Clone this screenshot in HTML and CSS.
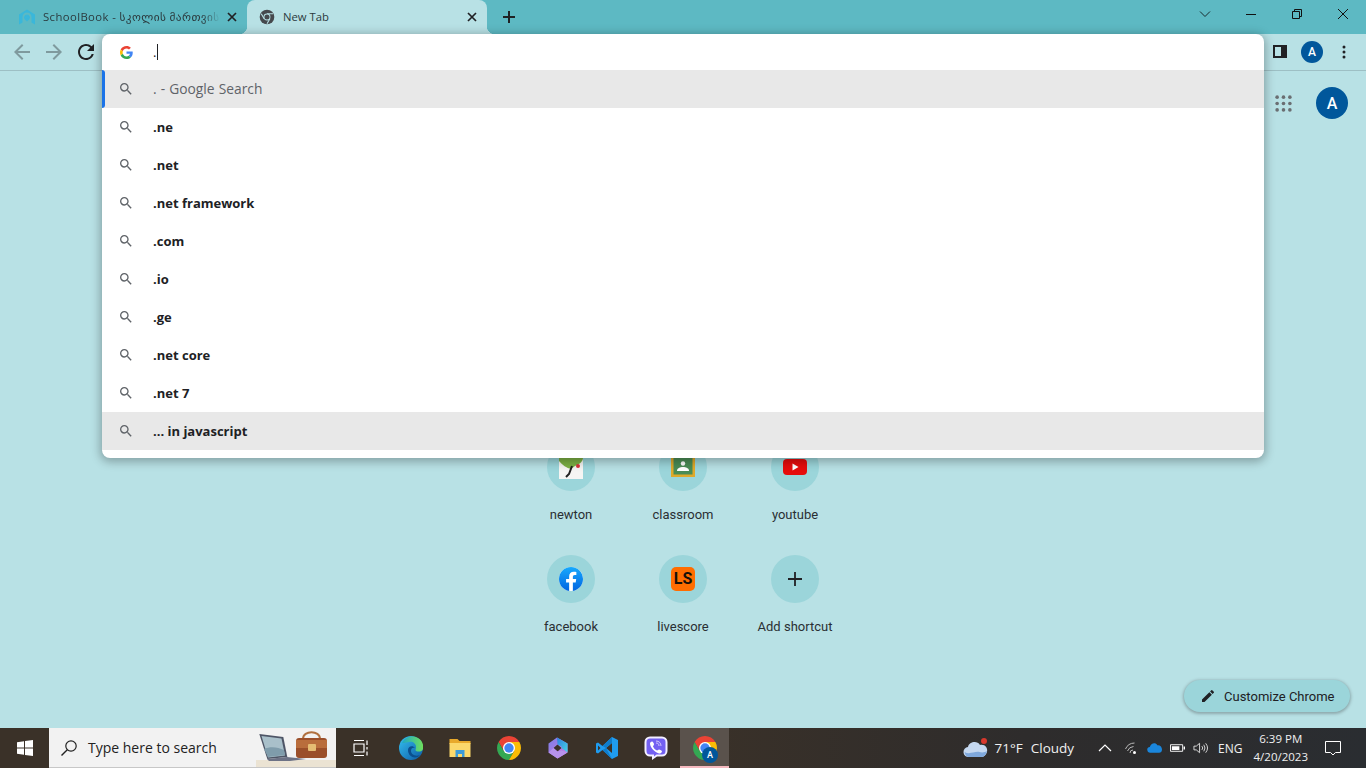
FILE: index.html
```html
<!DOCTYPE html>
<html lang="en">
<head>
<meta charset="utf-8">
<title>New Tab</title>
<link rel="stylesheet" href="styles.css">
</head>
<body>
<svg class="defs" aria-hidden="true">
  <defs>
    <symbol id="i-search" viewBox="0 0 24 24"><path d="M15.5 14h-.79l-.28-.27A6.471 6.471 0 0 0 16 9.5 6.5 6.5 0 1 0 9.5 16c1.61 0 3.09-.59 4.23-1.57l.27.28v.79l5 4.99L20.49 19l-4.99-5zm-6 0C7.01 14 5 11.99 5 9.5S7.01 5 9.5 5 14 7.01 14 9.5 11.99 14 9.5 14z"/></symbol>
    <symbol id="i-close" viewBox="0 0 12 12"><path d="M2 2l8 8M10 2l-8 8" stroke="currentColor" stroke-width="1.7" fill="none"/></symbol>
    <symbol id="i-chrome" viewBox="2 2 20 20">
      <path fill="#ea4335" d="M20.66 7A10 10 0 0 0 3.34 7L7.67 14.5 12 7z"/>
      <path fill="#34a853" d="M3.34 7A10 10 0 0 0 12 22l4.33-7.5H7.67z"/>
      <path fill="#fbbc05" d="M12 22A10 10 0 0 0 20.66 7H12l4.33 7.5z"/>
      <circle cx="12" cy="12" r="5" fill="#fff"/><circle cx="12" cy="12" r="3.9" fill="#4285f4"/>
    </symbol>
  </defs>
</svg>

<div class="tabstrip">
  <div class="tab">
    <svg class="favicon" viewBox="0 0 16 16"><path fill="#3ab7da" fill-rule="evenodd" d="M8 0.500L16 5.500v10l-3.500-2V8a4.500 4.500 0 0 0-9 0v5.500L0 15.500v-10zM8 5.500a3 3 0 0 1 2.400 4.800L8 12.500 5.600 10.300A3 3 0 0 1 8 5.500z"/><circle cx="8" cy="8.500" r="1.500" fill="#3ab7da"/></svg>
    <span class="tab-title tab-title-faded">SchoolBook - სკოლის მართვის</span>
    <svg class="tab-close"><use href="#i-close"/></svg>
  </div>
  <div class="tab tab-active">
    <svg class="favicon" viewBox="0 0 24 24"><circle cx="12" cy="12" r="11" fill="#45494d"/><path d="M12 7h9M7.67 14.5L3.4 7M16.33 14.5L12 22" stroke="#b8e1e5" stroke-width="1.6" fill="none"/><circle cx="12" cy="12" r="5.2" fill="#b8e1e5"/><circle cx="12" cy="12" r="3.8" fill="#45494d"/></svg>
    <span class="tab-title">New Tab</span>
    <svg class="tab-close"><use href="#i-close"/></svg>
  </div>
  <svg class="newtab" viewBox="0 0 14 14"><path d="M7 1v12M1 7h12" stroke="#1f2224" stroke-width="2" fill="none"/></svg>
  <div class="winctl">
    <div class="winbtn"><svg viewBox="0 0 12 12"><path d="M1 3.500l5 5 5-5" fill="none" stroke="#1a2a2d"/></svg></div>
    <div class="winbtn"><svg viewBox="0 0 12 12"><path d="M1 6.500h10" fill="none" stroke="#111"/></svg></div>
    <div class="winbtn"><svg viewBox="0 0 12 12"><path d="M1.500 3.500h7v7h-7zM3.500 3.500v-2h7v7h-2" fill="none" stroke="#111"/></svg></div>
    <div class="winbtn"><svg viewBox="0 0 12 12"><path d="M1 1l10 10M11 1L1 11" fill="none" stroke="#111"/></svg></div>
  </div>
</div>

<div class="toolbar">
  <svg class="nav nav-off" viewBox="0 0 24 24"><path d="M20 11H7.830l5.590-5.590L12 4l-8 8 8 8 1.410-1.410L7.830 13H20v-2z"/></svg>
  <svg class="nav nav-off" viewBox="0 0 24 24"><path d="M12 4l-1.410 1.410L16.170 11H4v2h12.170l-5.580 5.590L12 20l8-8z"/></svg>
  <svg class="nav" viewBox="0 0 24 24"><path d="M17.650 6.350A7.958 7.958 0 0 0 12 4c-4.420 0-7.990 3.580-7.990 8s3.570 8 7.990 8c3.730 0 6.840-2.550 7.730-6h-2.080A5.990 5.990 0 0 1 12 18c-3.310 0-6-2.690-6-6s2.690-6 6-6c1.660 0 3.140.69 4.220 1.780L13 11h7V4l-2.350 2.350z"/></svg>
  <div class="toolbar-end">
    <svg class="panel-icon" viewBox="0 0 14 14"><path fill="#202124" d="M0 0h14v13H0z"/><path fill="#b8e1e5" d="M2 2h6v9H2z"/></svg>
    <span class="avatar avatar-small">A</span>
    <svg class="menu-dots" viewBox="0 0 4 14"><circle cx="2" cy="2" r="1.500"/><circle cx="2" cy="7" r="1.500"/><circle cx="2" cy="12" r="1.500"/></svg>
  </div>
</div>

<main class="ntp">
  <header class="ntp-head">
    <svg class="apps" viewBox="0 0 16 16"><g fill="#6a6e72"><circle cx="2" cy="2" r="1.700"/><circle cx="8" cy="2" r="1.700"/><circle cx="14" cy="2" r="1.700"/><circle cx="2" cy="8" r="1.700"/><circle cx="8" cy="8" r="1.700"/><circle cx="14" cy="8" r="1.700"/><circle cx="2" cy="14" r="1.700"/><circle cx="8" cy="14" r="1.700"/><circle cx="14" cy="14" r="1.700"/></g></svg>
    <span class="avatar avatar-large">A</span>
  </header>
  <section class="tiles">
    <div class="tile"><span class="tile-disc"><svg class="tile-icon" viewBox="0 0 24 24"><path fill="#f5f5f3" d="M0 0h24v24H0z"/><path fill="#7cb044" d="M0 0h24v3c0 4-5 7-8 8l-4 3c-4-1-9-4-12-8z"/><path d="M13 11l-3 8-3 3" stroke="#222" stroke-width="2" fill="none"/><circle cx="19" cy="11" r="2" fill="#d8343a"/></svg></span><span class="tile-label">newton</span></div>
    <div class="tile"><span class="tile-disc"><svg class="tile-icon" viewBox="0 0 24 24"><path fill="#dfa92a" d="M0 0h24v22H0z"/><path fill="#4a8c55" d="M2.500 2h19v17.500h-19z"/><circle cx="12" cy="8.500" r="2.200" fill="#fff"/><path fill="#fff" d="M6 16c0-3 3-4 6-4s6 1 6 4z"/></svg></span><span class="tile-label">classroom</span></div>
    <div class="tile"><span class="tile-disc"><svg class="tile-icon" viewBox="0 0 24 24"><rect x="0" y="4" width="24" height="16" rx="4" fill="#e60c0c"/><path fill="#fff" d="M9.500 8.500v7l6-3.500z"/></svg></span><span class="tile-label">youtube</span></div>
    <div class="tile"><span class="tile-disc"><svg class="tile-icon" viewBox="0 0 24 24"><defs><linearGradient id="fb" x1="0" y1="0" x2="0" y2="1"><stop offset="0" stop-color="#17a9fd"/><stop offset="1" stop-color="#0165e1"/></linearGradient></defs><circle cx="12" cy="12" r="12" fill="#fff"/><path fill="url(#fb)" d="M24 12.070C24 5.400 18.630 0 12 0S0 5.400 0 12.070c0 6.030 4.390 11.020 10.130 11.930v-8.440H7.080v-3.490h3.050V9.410c0-3.020 1.790-4.690 4.530-4.690 1.310 0 2.690.23 2.690.23v2.970h-1.520c-1.490 0-1.960.93-1.960 1.890v2.260h3.330l-.53 3.490h-2.800V24C19.610 23.090 24 18.100 24 12.070z"/></svg></span><span class="tile-label">facebook</span></div>
    <div class="tile"><span class="tile-disc"><span class="ls-logo">LS</span></span><span class="tile-label">livescore</span></div>
    <div class="tile"><span class="tile-disc"><svg class="tile-plus" viewBox="0 0 14 14"><path d="M7 0v14M0 7h14" stroke="#202124" stroke-width="1.800" fill="none"/></svg></span><span class="tile-label">Add shortcut</span></div>
  </section>
  <button class="customize" type="button">
    <svg class="pencil" viewBox="0 0 24 24"><path d="M3 17.250V21h3.750L17.810 9.940l-3.750-3.750L3 17.250zM20.710 7.040a1 1 0 0 0 0-1.410l-2.340-2.340a1 1 0 0 0-1.410 0l-1.830 1.830 3.750 3.750 1.830-1.830z"/></svg>
    <span>Customize Chrome</span>
  </button>
</main>

<div class="omnibox">
  <div class="omni-input">
    <svg class="g-logo" viewBox="0 0 48 48"><path fill="#EA4335" d="M24 9.500c3.540 0 6.710 1.220 9.210 3.600l6.850-6.850C35.900 2.380 30.470 0 24 0 14.620 0 6.510 5.380 2.560 13.220l7.980 6.190C12.430 13.720 17.740 9.500 24 9.500z"/><path fill="#4285F4" d="M46.980 24.550c0-1.570-.15-3.090-.38-4.550H24v9.020h12.940c-.58 2.960-2.260 5.480-4.780 7.180l7.730 6c4.510-4.180 7.090-10.360 7.090-17.650z"/><path fill="#FBBC05" d="M10.530 28.590c-.48-1.450-.76-2.990-.76-4.590s.27-3.140.76-4.590l-7.980-6.190C.92 16.460 0 20.120 0 24c0 3.880.92 7.540 2.560 10.780l7.970-6.190z"/><path fill="#34A853" d="M24 48c6.480 0 11.930-2.130 15.890-5.810l-7.730-6c-2.150 1.450-4.920 2.300-8.160 2.300-6.260 0-11.570-4.220-13.470-9.910l-7.980 6.190C6.510 42.620 14.620 48 24 48z"/></svg>
    <span class="omni-text">.</span><span class="caret"></span>
  </div>
  <div class="omni-row omni-row-selected"><svg class="omni-icon"><use href="#i-search"/></svg><span class="omni-plain">. - Google Search</span></div>
  <div class="omni-row"><svg class="omni-icon"><use href="#i-search"/></svg><span class="omni-bold">.ne</span></div>
  <div class="omni-row"><svg class="omni-icon"><use href="#i-search"/></svg><span class="omni-bold">.net</span></div>
  <div class="omni-row"><svg class="omni-icon"><use href="#i-search"/></svg><span class="omni-bold">.net framework</span></div>
  <div class="omni-row"><svg class="omni-icon"><use href="#i-search"/></svg><span class="omni-bold">.com</span></div>
  <div class="omni-row"><svg class="omni-icon"><use href="#i-search"/></svg><span class="omni-bold">.io</span></div>
  <div class="omni-row"><svg class="omni-icon"><use href="#i-search"/></svg><span class="omni-bold">.ge</span></div>
  <div class="omni-row"><svg class="omni-icon"><use href="#i-search"/></svg><span class="omni-bold">.net core</span></div>
  <div class="omni-row"><svg class="omni-icon"><use href="#i-search"/></svg><span class="omni-bold">.net 7</span></div>
  <div class="omni-row omni-row-hover"><svg class="omni-icon"><use href="#i-search"/></svg><span class="omni-bold">... in javascript</span></div>
</div>

<footer class="taskbar">
  <div class="start"><svg viewBox="0 0 16 16"><path fill="#fff" d="M0 2.300L7 1.300V7.600H0zM8 1.100L16 0V7.600H8zM0 8.500H7V14.800L0 13.800zM8 8.500H16V16L8 14.900z"/></svg></div>
  <div class="searchbox">
    <svg class="searchbox-icon" viewBox="0 0 18 18"><circle cx="11" cy="7" r="5.200" fill="none" stroke="#222" stroke-width="1.200"/><path d="M7.300 10.700L1.500 16.500" stroke="#222" stroke-width="1.400"/></svg>
    <span class="searchbox-text">Type here to search</span>
    <svg class="searchbox-art" viewBox="0 0 80 40">
      <path fill="#ebe3d3" d="M0 32h80v8H0z"/>
      <path fill="#4e5566" d="M3.300 6l24 3 4 20-20 2z"/><path fill="#a9c0ca" d="M5.500 8l20 2.500 3.500 17-17 2z"/><path fill="#7f9cab" d="M8 21c6-3 14-2 20 1l1 5-17 2z"/>
      <path fill="#6d7285" d="M11 31l20-2 19 2-16 2H13z"/>
      <path fill="none" stroke="#b0703f" stroke-width="2" d="M47 11c0-9 17-9 17 0"/>
      <rect x="40" y="10" width="31" height="20" rx="3" fill="#9b4f2a"/><path fill="#b96d3c" d="M40 12h31v8H40z"/><rect x="52" y="16" width="8" height="7" rx="1" fill="#e5bc73"/>
    </svg>
  </div>
  <div class="taskview"><svg viewBox="0 0 16 16"><path fill="none" stroke="#fff" stroke-width="1.200" d="M1 .5h10M1 15.500h10M1 4h10v8H1zM14 .5v15"/><path stroke="#3a3128" stroke-width="2" d="M14 5v2M14 9.500v2"/></svg></div>
  <div class="pins">
    <div class="pin"><svg viewBox="0 0 24 24"><defs><linearGradient id="edge1" x1="0" y1="0" x2="1" y2="1"><stop offset="0" stop-color="#35c1f1"/><stop offset="1" stop-color="#0c59a4"/></linearGradient><linearGradient id="edge2" x1="0" y1="0" x2="1" y2="0"><stop offset="0" stop-color="#1fa8c4"/><stop offset="1" stop-color="#6fe05c"/></linearGradient></defs><circle cx="12" cy="12" r="12" fill="url(#edge1)"/><path fill="url(#edge2)" d="M3 7C6 1 13-1 19 2c4 2 6 7 5 11-1 3-5 3-7 2-1-1 0-2 0-4 0-4-4-6-7-5-3 0-6 2-7 1z"/><path fill="#0b4f8e" d="M9 14c0-4 5-5 7-2-2-1-4 0-4 3 0 3 4 6 9 4-4 5-12 2-12-5z"/></svg></div>
    <div class="pin"><svg viewBox="0 0 24 24"><path fill="#e8a92b" d="M1.500 3h8l2 2h11v3h-21z"/><path fill="#fbd86b" d="M1.500 7h21v14h-21z"/><path fill="#3c9bd8" d="M7.500 21v-7h9v7h-2.500v-3h-4v3z"/></svg></div>
    <div class="pin"><svg viewBox="0 0 24 24"><use href="#i-chrome"/></svg></div>
    <div class="pin"><svg viewBox="0 0 24 24"><defs><linearGradient id="m365a" x1="0" y1="0" x2="1" y2="1"><stop offset="0" stop-color="#2f7fe0"/><stop offset="1" stop-color="#46d4e6"/></linearGradient><linearGradient id="m365b" x1="0" y1="0" x2="1" y2="1"><stop offset="0" stop-color="#7a7fe8"/><stop offset="1" stop-color="#d27ae0"/></linearGradient></defs><path fill="url(#m365b)" fill-rule="evenodd" d="M11 1.500l10.500 6v9l-10 6-9-6v-9zM11.500 8.500L7.500 12l4 3.500 4-3.500z"/><path fill="url(#m365a)" d="M11 1.500l10.500 6v9l-6-4.500v-1.500l-4-2z"/><path fill="#b792ec" d="M2.500 16.500l5-4.500 4 3.500 4-1 6 2-10 6z"/></svg></div>
    <div class="pin"><svg viewBox="0 0 24 24"><path fill="#1f9cf0" fill-rule="evenodd" d="M17 1l6 3v16l-6 3L7.500 14 3 17.500 1 16.500v-9l2-1L7.500 10zM17 7l-6 5 6 5zM3 9.500v5L5.500 12z"/><path fill="#0f7ccb" d="M17 1l-9.500 9 3.500 2 6-5zM7.500 14L17 23l-6-11z"/></svg></div>
    <div class="pin"><svg viewBox="0 0 24 24"><path fill="#f3efff" d="M6 0.500h12A5.500 5.500 0 0 1 23.500 6v9a5.500 5.500 0 0 1-5.500 5.500h-5L8 24v-3.500H6A5.500 5.500 0 0 1 .5 15V6A5.500 5.500 0 0 1 6 .5z"/><path fill="#7360f2" d="M6 2.500h12A3.500 3.500 0 0 1 21.500 6v9a3.500 3.500 0 0 1-3.500 3.500h-5.500L10 20.500v-2H6A3.500 3.500 0 0 1 2.500 15V6A3.500 3.500 0 0 1 6 2.500z"/><path fill="#fff" d="M8 5.500c1 0 2 2 2 3s-1 1-1 2c1 2 2 3 4 4 1 0 1-1 2-1s3 1 3 2-2 2.500-3 2C10 16 6 11 6 7.500c0-1 1-2 2-2z"/><path fill="none" stroke="#d9d0fb" stroke-width=".9" d="M12 5c3 0 5 2 5 5M12 7c2 0 3 1 3 3"/></svg></div>
    <div class="pin pin-active"><svg viewBox="0 0 24 24"><use href="#i-chrome"/></svg><span class="pin-badge">A</span></div>
  </div>
  <div class="tray">
    <svg class="weather" viewBox="0 0 26 20"><circle cx="21" cy="3" r="3" fill="#d8382c"/><path fill="#c5d8f0" d="M6 19a5 5 0 0 1-1-10c1-5 9-7 12-2 5-1 8 3 7 7-1 3-3 5-6 5z"/><path fill="#7fa8dc" d="M1.500 14c5 3 10-1 15 0 3 1 6 0 7.500-1-1 4-3 6-6 6H6c-2 0-4-2-4.500-5z"/></svg>
    <span class="tray-temp">71°F</span>
    <span class="tray-cond">Cloudy</span>
    <svg class="tray-chev" viewBox="0 0 14 8"><path d="M1 7l6-6 6 6" fill="none" stroke="#fff" stroke-width="1.200"/></svg>
    <svg class="tray-ico" viewBox="0 0 14 14"><g fill="none" stroke="#bbb"><path d="M1 8a10 10 0 0 1 9-6M3 10a7 7 0 0 1 6-4.500M5.500 12a3 3 0 0 1 3-3"/></g><circle cx="10" cy="11.500" r="1.500" fill="#fff"/></svg>
    <svg class="tray-ico" viewBox="0 0 16 12"><path fill="#1a86dc" d="M3.500 11a3 3 0 0 1-.5-6C4 1 9-.5 11 3c3-.5 5 2 5 4.500C16 10 14.500 11 13 11z"/></svg>
    <svg class="tray-ico" viewBox="0 0 16 10"><path fill="none" stroke="#fff" d="M.5 1.500h13v7H.5z"/><path fill="#fff" d="M2 3h8v4H2zM14.500 3.500H16v3h-1.500z"/></svg>
    <svg class="tray-ico" viewBox="0 0 16 14"><path fill="none" stroke="#ddd" d="M1 5v4h2.500L7 12V2L3.500 5zM9.500 5a3 3 0 0 1 0 4M11.500 3.500a6 6 0 0 1 0 7M13.500 2a8 8 0 0 1 0 10"/></svg>
    <span class="tray-lang">ENG</span>
    <div class="clock"><span>6:39 PM</span><span>4/20/2023</span></div>
    <svg class="notif" viewBox="0 0 16 15"><path fill="none" stroke="#fff" d="M.5.500h15v11h-5L8 14l-2.500-2.500h-5z"/></svg>
  </div>
</footer>
</body>
</html>
```
FILE: styles.css
```css
* { box-sizing: border-box; }
html, body { margin: 0; height: 100%; }
body {
  width: 1366px;
  height: 768px;
  overflow: hidden;
  position: relative;
  display: flex;
  flex-direction: column;
  background: #b8e1e5;
  font-family: Roboto, "Liberation Sans", sans-serif;
  color: #202124;
}
.defs { width: 0; height: 0; position: absolute; }

/* tab strip */
.tabstrip {
  height: 34px;
  flex: none;
  display: flex;
  align-items: stretch;
  padding-left: 8px;
  background: #5db9c3;
}
.tab {
  width: 239px;
  display: flex;
  align-items: center;
  padding: 0 9px 0 11px;
  font-family: "Open Sans", "DejaVu Sans", sans-serif;
  font-size: 11.300px;
  color: #2b3a3e;
}
.tab-active {
  position: relative;
  width: 240px;
  background: #b8e1e5;
  border-radius: 8px 8px 0 0;
  padding: 0 9px 0 12px;
}
.tab-active::before,
.tab-active::after {
  content: "";
  position: absolute;
  bottom: 0;
  width: 8px;
  height: 8px;
}
.tab-active::before { left: -8px; background: radial-gradient(circle at 0 0, transparent 8px, #b8e1e5 8.500px); }
.tab-active::after { right: -8px; background: radial-gradient(circle at 100% 0, transparent 8px, #b8e1e5 8.500px); }
.favicon { width: 16px; height: 16px; flex: none; }
.tab-title {
  flex: 1;
  margin-left: 8px;
  margin-bottom: 2px;
  white-space: nowrap;
  overflow: hidden;
}
.tab-title-faded {
  letter-spacing: .4px;
  -webkit-mask-image: linear-gradient(to right, #000 90%, transparent);
  mask-image: linear-gradient(to right, #000 90%, transparent);
}
.tab-close { width: 12px; height: 12px; flex: none; margin-left: 6px; color: #202124; }
.newtab { width: 14px; height: 14px; align-self: center; margin-left: 15px; }
.winctl { margin-left: auto; display: flex; }
.winbtn { width: 46px; display: flex; align-items: flex-start; justify-content: center; padding-top: 8px; }
.winbtn svg { width: 12px; height: 12px; }

/* toolbar */
.toolbar {
  height: 37px;
  flex: none;
  display: flex;
  align-items: center;
  gap: 8px;
  padding: 0 12px 1px 10px;
  background: #b8e1e5;
  border-bottom: 1px solid #9dbfc4;
}
.nav { width: 24px; height: 24px; fill: #202124; }
.nav-off { fill: #7f9a9e; }
.toolbar-end { margin-left: auto; display: flex; align-items: center; }
.panel-icon { width: 14px; height: 14px; margin-right: 14px; }
.avatar {
  display: flex;
  align-items: center;
  justify-content: center;
  border-radius: 50%;
  background: #01579b;
  color: #fff;
  font-weight: 500;
}
.avatar-small { width: 22px; height: 22px; font-size: 12px; }
.menu-dots { width: 4px; height: 14px; margin-left: 19px; margin-right: 8px; fill: #202124; }

/* new tab page */
.ntp { flex: 1; min-height: 0; display: flex; flex-direction: column; }
.ntp-head {
  display: flex;
  align-items: center;
  justify-content: flex-end;
  gap: 24px;
  height: 32px;
  margin-top: 16px;
  padding-right: 18px;
}
.apps { width: 17px; height: 17px; }
.avatar-large { width: 32px; height: 32px; font-size: 16px; }
.tiles {
  margin: 324px auto 0;
  display: grid;
  grid-template-columns: repeat(3, 112px);
  grid-auto-rows: 112px;
}
.tile { display: flex; flex-direction: column; align-items: center; }
.tile-disc {
  width: 48px;
  height: 48px;
  border-radius: 50%;
  background: #9bd5da;
  display: flex;
  align-items: center;
  justify-content: center;
}
.tile-icon { width: 24px; height: 24px; }
.tile-plus { width: 14px; height: 14px; }
.ls-logo {
  width: 24px;
  height: 24px;
  border-radius: 5px;
  background: #ff6d00;
  color: #16110a;
  font-size: 16px;
  font-weight: 700;
  line-height: 24px;
  text-align: center;
}
.tile-label { margin-top: 16px; font-size: 13px; line-height: 16px; color: #2a2f33; white-space: nowrap; }
.customize {
  margin: auto 16px 16px 0;
  align-self: flex-end;
  width: 166px;
  height: 32px;
  border: 0;
  border-radius: 16px;
  padding: 0 0 0 16px;
  display: flex;
  align-items: center;
  gap: 8px;
  background: #9bd5da;
  box-shadow: 0 1px 3px 1px rgba(60, 64, 67, .35);
  font-family: Roboto, sans-serif;
  font-size: 13px;
  color: #202124;
}
.pencil { width: 16px; height: 16px; fill: #202124; }

/* omnibox dropdown */
.omnibox {
  position: absolute;
  left: 102px;
  top: 34px;
  width: 1162px;
  height: 424px;
  background: #fff;
  border-radius: 8px;
  box-shadow: 0 2px 10px 2px rgba(0, 0, 0, .28);
}
.omni-input { height: 36px; display: flex; align-items: center; padding-left: 18px; }
.g-logo { width: 13px; height: 13px; flex: none; margin-right: 20px; }
.omni-text { font-family: "Open Sans", sans-serif; font-size: 13px; color: #202124; }
.caret { width: 1px; height: 16px; background: #202124; margin-left: 1px; }
.omni-row {
  position: relative;
  height: 38px;
  display: flex;
  align-items: center;
  padding-left: 16px;
  font-family: "Open Sans", sans-serif;
  font-size: 13px;
}
.omni-row-selected, .omni-row-hover { background: #e8e8e8; }
.omni-row-selected::before {
  content: "";
  position: absolute;
  left: 0;
  top: 0;
  bottom: 0;
  width: 3px;
  background: #1a73e8;
  border-radius: 0 3px 3px 0;
}
.omni-icon { width: 16px; height: 16px; flex: none; margin-right: 19px; fill: #5f6368; }
.omni-plain { color: #5f6368; font-size: 13.800px; margin-bottom: 1px; word-spacing: .5px; }
.omni-bold { font-weight: 700; color: #202124; }

/* taskbar */
.taskbar {
  height: 40px;
  flex: none;
  display: flex;
  align-items: stretch;
  color: #fff;
  background: linear-gradient(to right, #3a3128 0, #3a3128 50%, #2e2c2c 75%, #2a2d31 100%);
  font-family: "Open Sans", sans-serif;
}
.start { width: 49px; display: flex; align-items: center; justify-content: center; }
.start svg { width: 16px; height: 16px; }
.searchbox {
  width: 287px;
  display: flex;
  align-items: center;
  padding-left: 11px;
  background: #f2f2f2;
  border-bottom: 1px solid #c7c7c7;
  color: #1f1f1f;
  overflow: hidden;
}
.searchbox-icon { width: 18px; height: 18px; flex: none; }
.searchbox-text { margin-left: 10px; font-size: 14px; color: #222; white-space: nowrap; }
.searchbox-art { width: 80px; height: 40px; flex: none; margin-left: auto; }
.taskview { width: 49px; display: flex; align-items: center; justify-content: center; }
.taskview svg { width: 16px; height: 16px; }
.pins { display: flex; margin-left: 1px; }
.pin { position: relative; width: 49px; display: flex; align-items: center; justify-content: center; }
.pin svg { width: 24px; height: 24px; }
.pin-active { background: #5a524c; border-bottom: 2px solid #f5b9bf; padding-top: 2px; }
.pin-badge {
  position: absolute;
  left: 22px;
  top: 19px;
  width: 16px;
  height: 16px;
  border-radius: 50%;
  background: #01579b;
  color: #fff;
  font: 500 9px/16px Roboto, sans-serif;
  text-align: center;
}
.tray { margin-left: auto; display: flex; align-items: center; font-size: 13.500px; color: #f0f0f0; padding-right: 25px; }
.weather { width: 26px; height: 20px; }
.tray-temp { margin-left: 6px; }
.tray-cond { margin-left: 8px; margin-right: 24px; }
.tray-chev { width: 14px; height: 8px; margin-right: 12px; }
.tray-ico { width: 15px; height: 14px; margin-right: 8px; }
.tray-lang { font-size: 12px; margin-left: 2px; }
.clock { display: flex; flex-direction: column; align-items: center; margin-left: 11px; font-size: 11.500px; line-height: 18px; }
.notif { width: 16px; height: 15px; margin-left: 17px; }
```
